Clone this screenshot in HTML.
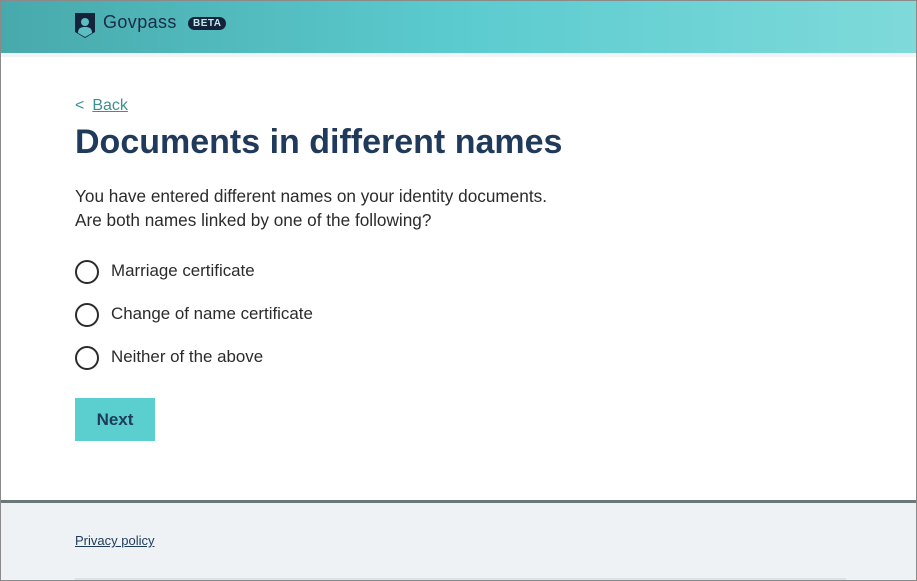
<!DOCTYPE html>
<html><head><meta charset="utf-8"><style>
*{box-sizing:border-box;margin:0;padding:0}
html,body{width:917px;height:581px;overflow:hidden;background:#fff;font-family:"Liberation Sans","DejaVu Sans",sans-serif}
.frame{position:absolute;inset:0;border:1px solid #8a8a8a}
.hdr{position:absolute;left:0;top:0;width:917px;height:53px;background:linear-gradient(90deg,#48a9ab 0%,#5bcbcf 50%,#7fdada 100%)}
.strip{position:absolute;left:0;top:53px;width:917px;height:4px;background:#f1f4f6}
.logo{position:absolute;left:75px;top:13px}
.brand{position:absolute;left:103px;top:12px;font-size:18px;color:#1c2b45;letter-spacing:.4px}
.beta{position:absolute;left:188px;top:17px;background:#14233b;color:#bfe9ea;font-size:10px;font-weight:bold;border-radius:7px;padding:1px 5px;letter-spacing:.5px;line-height:11px}
.back{position:absolute;left:75px;top:97px;font-size:16px;color:#3f8f94}
.back span{text-decoration:underline;margin-left:8px}
h1{position:absolute;left:75px;top:123px;font-size:34px;font-weight:bold;color:#1f3a5a;white-space:nowrap}
.p{position:absolute;left:75px;top:184px;font-size:17.2px;line-height:24px;color:#2b2b2b}
.r{position:absolute;left:75px;font-size:16.9px;color:#2b2b2b}
.r i{position:absolute;left:0;top:-1px;width:24px;height:24px;border:2px solid #2b2b2b;border-radius:50%}
.r span{position:absolute;left:36px;top:0;white-space:nowrap}
.btn{position:absolute;left:75px;top:398px;width:80px;height:43px;background:#5bcfcf;color:#1f3a5a;font-weight:bold;font-size:17px;text-align:center;line-height:43px}
.foot{position:absolute;left:0;top:500px;width:917px;height:81px;background:#eef2f5;border-top:3px solid #6b7778}
.pp{position:absolute;left:75px;top:533px;font-size:13px;color:#1f3a5a;text-decoration:underline}
.fl{position:absolute;left:75px;top:578px;width:771px;height:3px;background:#dde2e6}
</style></head><body>
<div class="hdr"></div><div class="strip"></div>
<svg class="logo" width="20" height="25" viewBox="0 0 20 25"><path d="M0 0H20V19L10 25L0 19Z" fill="#14233b"/><circle cx="10" cy="9" r="4" fill="#5bbfc2"/><path d="M3 20C3 15 6 14 10 14C14 14 17 15 17 20L10 24Z" fill="#5bbfc2"/></svg>
<div class="brand">Govpass</div><div class="beta">BETA</div>
<div class="back">&lt;<span>Back</span></div>
<h1>Documents in different names</h1>
<div class="p">You have entered different names on your identity documents.<br>Are both names linked by one of the following?</div>
<div class="r" style="top:261px"><i></i><span>Marriage certificate</span></div>
<div class="r" style="top:304px"><i></i><span>Change of name certificate</span></div>
<div class="r" style="top:347px"><i></i><span>Neither of the above</span></div>
<div class="btn">Next</div>
<div class="foot"></div>
<div class="pp">Privacy policy</div>
<div class="fl"></div>
<div class="frame"></div>
</body></html>
